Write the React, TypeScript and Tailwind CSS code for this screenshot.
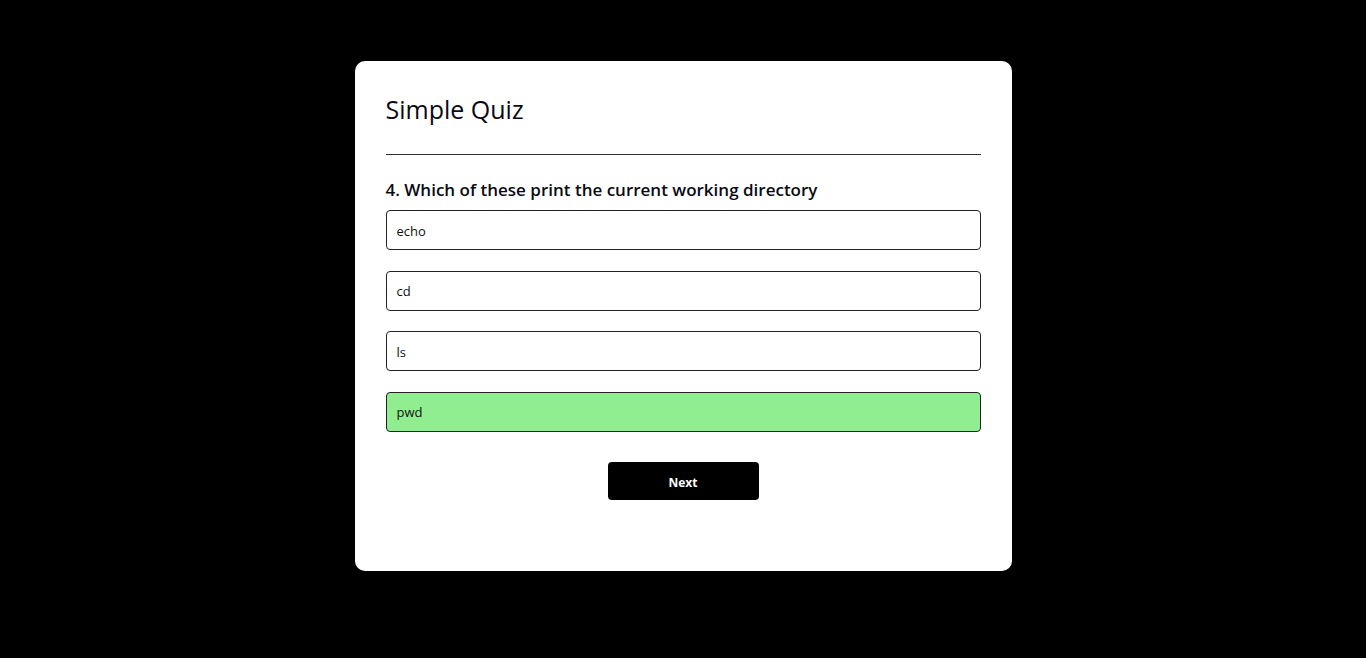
const options = [
  { id: 1, text: "echo", correct: false },
  { id: 2, text: "cd", correct: false },
  { id: 3, text: "ls", correct: false },
  { id: 4, text: "pwd", correct: true },
];

const App = () => {
  return (
    <div
      className="min-h-screen w-full bg-black pt-[61px]"
      style={{ fontFamily: '"Open Sans", "Noto Sans", sans-serif' }}
    >
      <div className="mx-auto w-[657px] rounded-[10px] bg-white px-[31px] pt-[30px] pb-[71px]">
        <h1 className="text-[25px] leading-[36px] font-medium text-[#0a0a14]">
          Simple Quiz
        </h1>
        <div className="mt-[27px] border-b border-[#333]" />
        <h2 className="mt-[21px] text-[17px] leading-[27px] font-semibold text-[#0a0a14]">
          4. Which of these print the current working directory
        </h2>
        <div className="mt-[7px] flex flex-col gap-[20.5px]">
          {options.map((option) => (
            <button
              key={option.id}
              className={`h-[40px] w-full rounded-[4px] border border-[#222] px-[10px] pt-[3px] text-left text-[13px] text-[#111] ${
                option.correct ? "bg-[#90ee90]" : "bg-white"
              }`}
            >
              {option.text}
            </button>
          ))}
        </div>
        <div className="mt-[30px] flex justify-center">
          <button className="h-[38px] w-[151px] rounded-[4px] bg-black pt-[4px] text-[12px] font-bold text-white">
            Next
          </button>
        </div>
      </div>
    </div>
  );
};

export default App;
